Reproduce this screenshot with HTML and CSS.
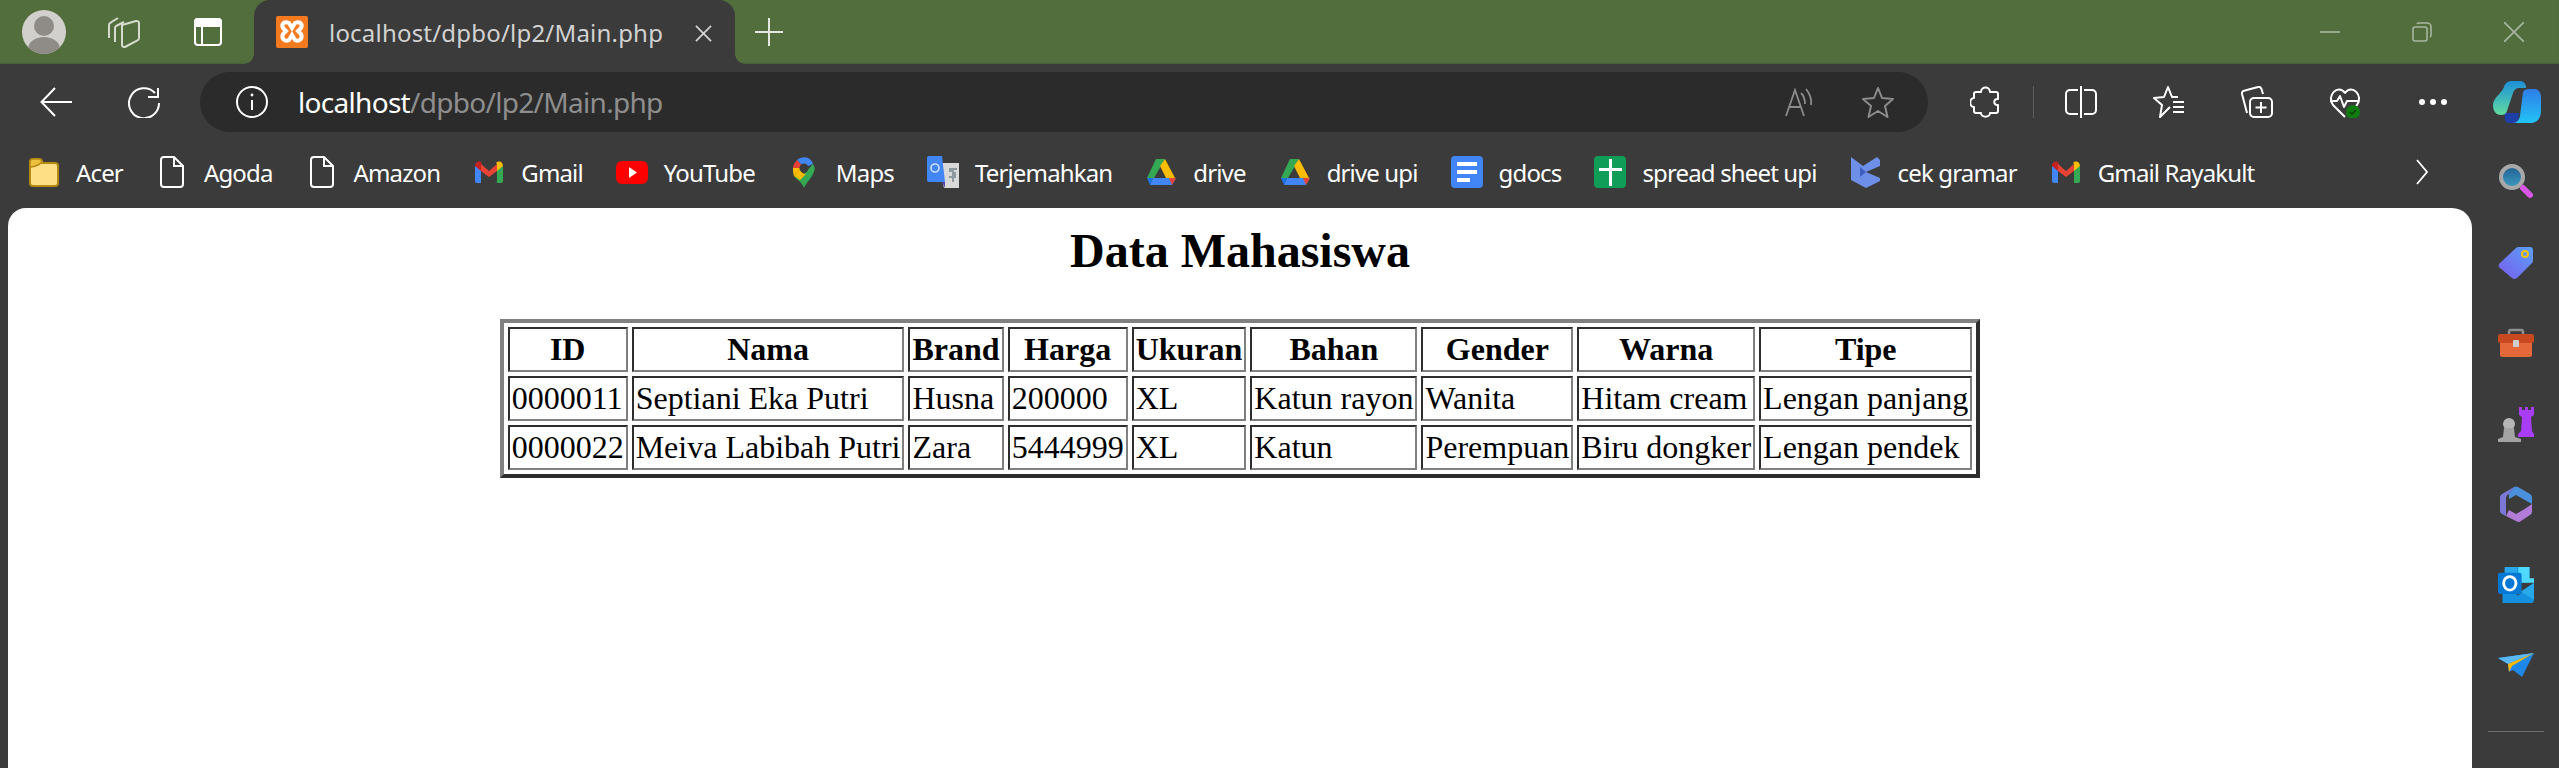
FILE: index.html
```html
<!DOCTYPE html>
<html lang="en">
<head>
    <meta charset="UTF-8">
    <title>localhost/dpbo/lp2/Main.php</title>
    <link rel="stylesheet" href="styles.css">
</head>
<body>
<svg class="defs" width="0" height="0">
    <symbol id="gmail" viewBox="0 0 32 32">
        <path fill="#4285f4" d="M2 10v15a2 2 0 0 0 2 2h4V13z"/>
        <path fill="#34a853" d="M30 10v15a2 2 0 0 1-2 2h-4V13z"/>
        <path fill="#ea4335" d="M8 8l8 7 8-7v7l-8 6-8-6z"/>
        <path fill="#c5221f" d="M2 10c0-4 4-6 7-3l-1 1v7L2 10z"/>
        <path fill="#fbbc04" d="M30 10c0-4-4-6-7-3l1 1v7l6-5z"/>
    </symbol>
    <symbol id="drive" viewBox="0 0 32 32">
        <path fill="#34a853" d="M11 3h9L9 22H2z"/>
        <path fill="#fbbc04" d="M20 3l10 19h-9L15 10z"/>
        <path fill="#4285f4" d="M8 22h23l-4 7H5z"/>
        <path fill="#ea4335" d="M24 22h7l-4 7z"/>
        <path fill="#1a73e8" d="M2 22h6l-3 7z"/>
    </symbol>
    <symbol id="page" viewBox="0 0 32 32">
        <path fill="none" stroke="#fff" stroke-width="2" d="M8 1h10l9 9v18a3 3 0 0 1-3 3H8a3 3 0 0 1-3-3V4a3 3 0 0 1 3-3zM18 1v9h9"/>
    </symbol>
</svg>

<div class="window">
    <header class="titlebar">
        <svg class="avatar" viewBox="0 0 44 44">
            <clipPath id="av"><circle cx="22" cy="22" r="22"/></clipPath>
            <circle cx="22" cy="22" r="22" fill="#d2d0cc"/>
            <g clip-path="url(#av)" fill="#8f8b87">
                <circle cx="22" cy="16" r="10"/>
                <ellipse cx="22" cy="39" rx="16" ry="12"/>
            </g>
        </svg>
        <svg class="ic32 tabs-ic" viewBox="0 0 32 32" fill="none" stroke="#d5dccf" stroke-width="2">
            <path d="M1 22V9c0-1 .6-2 1.600-2.300L10 2"/>
            <path d="M7 26V12c0-1 .6-2 1.600-2.300L16 6"/>
            <path d="M14 9l14-4c1.500-.4 3 .5 3 2v15c0 1-.6 2-1.600 2.400L17 31c-1.500.4-3-.5-3-2z"/>
        </svg>
        <svg class="vtabs-ic" viewBox="0 0 28 28" fill="none" stroke="#fff" stroke-width="2">
            <rect x="1" y="1" width="26" height="26" rx="3"/>
            <path fill="#fff" d="M1 4a3 3 0 0 1 3-3h20a3 3 0 0 1 3 3v4H1z"/>
            <path d="M8 8v19"/>
        </svg>
        <div class="tab">
            <svg class="ic32" viewBox="0 0 32 32">
                <rect width="32" height="32" rx="2" fill="#f47a1f"/>
                <path fill="none" stroke="#fff" stroke-width="4" d="M13 7C8 5 5 8 7 12l3 3-3 3c-2 5 2 8 6 6l3-5 3 5c4 2 8-1 6-6l-3-3 3-3c2-4-1-7-6-5l-3 5z"/>
            </svg>
            <span class="tab-title">localhost/dpbo/lp2/Main.php</span>
            <svg class="tab-close" viewBox="0 0 18 18" stroke="#d4d4d4" stroke-width="1.8"><path d="M1 1l16 16M17 1L1 17"/></svg>
        </div>
        <svg class="new-tab" viewBox="0 0 28 28" stroke="#e4e8e0" stroke-width="2"><path d="M14 0v28M0 14h28"/></svg>
        <div class="win-controls">
            <svg class="win-ic" viewBox="0 0 20 20" stroke="#a9b6a0" stroke-width="1.600"><path d="M0 10h20"/></svg>
            <svg class="win-ic" viewBox="0 0 20 20" fill="none" stroke="#a9b6a0" stroke-width="1.600"><rect x="1" y="5" width="14" height="14" rx="2"/><path d="M5 2a2 2 0 0 1 2-1h8a4 4 0 0 1 4 4v8a2 2 0 0 1-1 2"/></svg>
            <svg class="win-ic" viewBox="0 0 20 20" stroke="#a9b6a0" stroke-width="1.600"><path d="M0 0l20 20M20 0L0 20"/></svg>
        </div>
    </header>

    <div class="toolbar">
        <svg class="ic32" viewBox="0 0 32 32" fill="none" stroke="#fff" stroke-width="2"><path d="M32 16H2M15 2L1.500 16 15 30"/></svg>
        <svg class="ic32" viewBox="0 0 32 32" fill="none" stroke="#fff" stroke-width="2"><path d="M27 7A15 15 0 1 0 31 17M30 2v9H20"/></svg>
        <div class="address">
            <svg class="ic32" viewBox="0 0 32 32" fill="none" stroke="#fff" stroke-width="2"><circle cx="16" cy="16" r="15"/><path d="M16 14v10"/><circle cx="16" cy="9" r="1.400" fill="#fff" stroke="none"/></svg>
            <span class="url"><span class="url-host">localhost</span>/dpbo/lp2/Main.php</span>
            <svg class="read-ic" viewBox="0 0 30 30" fill="none" stroke="#8c8c8c" stroke-width="1.800"><path d="M1 29L10 3l9 26M4.500 20h11M16 6c3 3 4 7 4 11M21 2c4 5 6 10 5 16"/></svg>
            <svg class="ic32" viewBox="0 0 32 32" fill="none" stroke="#8c8c8c" stroke-width="2"><path d="M16 2l4 10 11 1-8 7 2.500 11L16 25l-9.500 6L9 20l-8-7 11-1z" stroke-linejoin="round"/></svg>
        </div>
        <div class="tools">
            <div class="tools-left">
                <svg class="ic32" viewBox="0 0 32 32" fill="none" stroke="#fff" stroke-width="2"><path d="M11 6c0-6 9-6 9 0h6a2 2 0 0 1 2 2v5c-5-1-5 7 0 6v6a2 2 0 0 1-2 2h-6c0 5-9 5-9 0H6a2 2 0 0 1-2-2v-4c-5 0-5-9 0-9V8a2 2 0 0 1 2-2z" stroke-linejoin="round"/></svg>
                <span class="tool-sep"></span>
                <svg class="ic32" viewBox="0 0 32 32" fill="none" stroke="#fff" stroke-width="2"><path d="M13 4H5a4 4 0 0 0-4 4v16a4 4 0 0 0 4 4h8M19 4h8a4 4 0 0 1 4 4v16a4 4 0 0 1-4 4h-8M16 0v32"/></svg>
            </div>
            <svg class="ic32" viewBox="0 0 32 32" fill="none" stroke="#fff" stroke-width="2"><path d="M17 21l-10 10 2-12-8-7 10-1 4-10 4 10h6M20 16h11M20 21h11M20 26h11" stroke-linejoin="round"/></svg>
            <svg class="ic32" viewBox="0 0 32 32" fill="none" stroke="#fff" stroke-width="2"><path d="M6 27L1 8c-.4-1.500.5-3 2-3.300L17 1c1.500-.4 3 .5 3.500 2l1.500 5"/><rect x="9" y="12" width="22" height="19" rx="4"/><path d="M20 16v11M14.500 21.500h11"/></svg>
            <svg class="ic32" viewBox="0 0 32 32" fill="none" stroke="#fff" stroke-width="2">
                <path d="M16 31L4 19C-3 10 9-3 16 7c7-10 19 3 12 12l-1 1M1 15h7l3-5 4 11 3-6h12" stroke-linejoin="round"/>
                <circle cx="24" cy="26" r="7" fill="#107c10" stroke="none"/>
                <path d="M21 26l2 2 4-4" stroke="#0a3d0a" stroke-width="1.400"/>
            </svg>
            <svg class="ic32" viewBox="0 0 32 32" fill="#fff"><circle cx="5" cy="16" r="3"/><circle cx="16" cy="16" r="3"/><circle cx="27" cy="16" r="3"/></svg>
            <svg class="copilot" viewBox="0 0 48 42">
                <defs>
                    <linearGradient id="cp1" x1="0" y1="0" x2="0" y2="1"><stop offset="0" stop-color="#1b8fd8"/><stop offset="1" stop-color="#62dca0"/></linearGradient>
                    <linearGradient id="cp2" x1="0" y1="0" x2="0" y2="1"><stop offset="0" stop-color="#2f7de8"/><stop offset="1" stop-color="#22c3f5"/></linearGradient>
                </defs>
                <path fill="#1f3fa8" d="M12 32h14l-1 10H16c-4 0-5-5-4-10z"/>
                <path fill="url(#cp1)" d="M11 6c1-4 4-6 8-6h8c4 0 6 3 6 7H26c-3 0-5 2-6 5l-6 18c-1 3-3 4-6 4-5 0-8-4-8-10C0 17 8 13 11 6z"/>
                <path fill="url(#cp2)" d="M30 11c1-2 3-3 6-3h6c3 0 6 3 6 8v14c0 7-4 12-10 12H20c4 0 6-3 7-7z"/>
            </svg>
        </div>
    </div>

    <div class="lower">
        <div class="content">
            <nav class="bookmarks">
                <a class="bm">
                    <svg class="ic32" viewBox="0 0 32 32"><path fill="#ffdf85" stroke="#b38a12" stroke-width="2" d="M2 6a3 3 0 0 1 3-3h6a3 3 0 0 1 3 4h13a3 3 0 0 1 3 3v17a3 3 0 0 1-3 3H5a3 3 0 0 1-3-3z"/><path fill="#ecbf3c" stroke="#b38a12" stroke-width="1.500" d="M2 11V6a3 3 0 0 1 3-3h6c3 0 3 3 2 4l-3 2c-2 1-5 2-8 2z"/></svg>
                    Acer
                </a>
                <a class="bm"><svg class="ic32"><use href="#page"/></svg>Agoda</a>
                <a class="bm"><svg class="ic32"><use href="#page"/></svg>Amazon</a>
                <a class="bm"><svg class="ic32"><use href="#gmail"/></svg>Gmail</a>
                <a class="bm">
                    <svg class="ic32" viewBox="0 0 32 32"><rect y="5" width="32" height="23" rx="6" fill="#f00"/><path fill="#fff" d="M13 11l8 5.500-8 5.500z"/></svg>
                    YouTube
                </a>
                <a class="bm">
                    <svg class="ic32" viewBox="0 0 32 32">
                        <path fill="#34a853" d="M6 20c3 4 8 6 10 12 2-6 8-9 10-17L16 18z"/>
                        <path fill="#fbbc04" d="M5 12c0 3 0 5 1 8l6-7-1-3z"/>
                        <path fill="#ea4335" d="M5 12C5 9 7 6 9 4l5 5-3 3z"/>
                        <path fill="#4285f4" d="M9 4c6-5 14-3 16 4l-7 3-4-2z"/>
                        <path fill="#34a853" d="M25 8c2 3 2 5 1 8l-9 7-2-4z"/>
                        <path fill="#fbbc04" d="M6 20l6-7c1 3 3 5 6 5l-6 6z"/>
                        <circle cx="16" cy="12" r="4.500" fill="#3b3b3b"/>
                    </svg>
                    Maps
                </a>
                <a class="bm">
                    <svg class="ic32" viewBox="0 0 32 32">
                        <path fill="#d9d9d9" d="M11 7h21v25H17z"/>
                        <path fill="#8e9aa0" d="M22 12h8v2h-3v2h2v6h-2v4h-2v-4h-3v-2h3v-4h-3z"/>
                        <path fill="#5144b0" d="M15 26h3v6z"/>
                        <path fill="#4285f4" d="M0 2a2 2 0 0 1 2-2h13l3 26H2a2 2 0 0 1-2-2z"/>
                        <circle cx="8" cy="12" r="4" fill="none" stroke="#cfe0fb" stroke-width="1.600"/>
                    </svg>
                    Terjemahkan
                </a>
                <a class="bm"><svg class="ic32"><use href="#drive"/></svg>drive</a>
                <a class="bm"><svg class="ic32"><use href="#drive"/></svg>drive upi</a>
                <a class="bm">
                    <svg class="ic32" viewBox="0 0 32 32"><rect width="32" height="32" rx="4" fill="#4285f4"/><path fill="#fff" d="M6 6h20v4H6zM6 14h20v4H6zM6 22h13v4H6z"/></svg>
                    gdocs
                </a>
                <a class="bm">
                    <svg class="ic32" viewBox="0 0 32 32"><rect width="32" height="32" rx="4" fill="#0f9d58"/><path fill="#fff" d="M15 3h3v9h10v3H18v15h-3V15H5v-3h10z"/></svg>
                    spread sheet upi
                </a>
                <a class="bm">
                    <svg class="ic32" viewBox="0 0 32 32"><path fill="#6d8fe8" d="M1 1l12 9L27 1l3 3v6l-14 6 14 6v3L16 32 1 24z"/><path fill="#3d5fc4" d="M10 11l6 5-6 5z"/></svg>
                    cek gramar
                </a>
                <a class="bm"><svg class="ic32"><use href="#gmail"/></svg>Gmail Rayakult</a>
                <svg class="bm-more" viewBox="0 0 12 26" fill="none" stroke="#fff" stroke-width="1.800"><path d="M1 1l10 12L1 25"/></svg>
            </nav>
            <main class="page">
                <h1 class="page-title">Data Mahasiswa</h1>
                <table class="data">
                    <tr><th>ID</th><th>Nama</th><th>Brand</th><th>Harga</th><th>Ukuran</th><th>Bahan</th><th>Gender</th><th>Warna</th><th>Tipe</th></tr>
                    <tr><td>0000011</td><td>Septiani Eka Putri</td><td>Husna</td><td>200000</td><td>XL</td><td>Katun rayon</td><td>Wanita</td><td>Hitam cream</td><td>Lengan panjang</td></tr>
                    <tr><td>0000022</td><td>Meiva Labibah Putri</td><td>Zara</td><td>5444999</td><td>XL</td><td>Katun</td><td>Perempuan</td><td>Biru dongker</td><td>Lengan pendek</td></tr>
                </table>
            </main>
        </div>
        <aside class="sidebar">
            <div class="side-item">
                <svg class="side-ic" viewBox="0 0 36 36">
                    <defs><linearGradient id="lens" x1="0" y1="0" x2="0" y2="1"><stop offset="0" stop-color="#1f5f8f"/><stop offset="1" stop-color="#3f9cc4"/></linearGradient></defs>
                    <circle cx="14" cy="13" r="11" fill="url(#lens)" stroke="#a8a8a8" stroke-width="4"/>
                    <path stroke="#d957e8" stroke-width="6" stroke-linecap="round" d="M25 24l7 7"/>
                </svg>
            </div>
            <div class="side-item">
                <svg class="side-ic" viewBox="0 0 36 36">
                    <defs><linearGradient id="tag" x1="0" y1="1" x2="1" y2="0"><stop offset="0" stop-color="#7a5cf0"/><stop offset="1" stop-color="#5aa0f5"/></linearGradient></defs>
                    <path fill="url(#tag)" d="M21 2h11a3 3 0 0 1 3 3v10a4 4 0 0 1-1 3L19 33a4 4 0 0 1-5 0L2 23a3 3 0 0 1 0-5L18 3a4 4 0 0 1 3-1z"/>
                    <circle cx="27" cy="9" r="3" fill="none" stroke="#f7c600" stroke-width="2"/>
                </svg>
            </div>
            <div class="side-item">
                <svg class="side-ic" viewBox="0 0 36 36">
                    <path fill="none" stroke="#8f8f8f" stroke-width="2.500" d="M11 10V7a2 2 0 0 1 2-2h10a2 2 0 0 1 2 2v3"/>
                    <path fill="#e5683a" d="M2 15h32v15a2 2 0 0 1-2 2H4a2 2 0 0 1-2-2z"/>
                    <path fill="#c8481f" d="M0 11a2 2 0 0 1 2-2h32a2 2 0 0 1 2 2v5a2 2 0 0 1-2 2H2a2 2 0 0 1-2-2z"/>
                    <rect x="15" y="15" width="6" height="7" rx="1" fill="#cfcfcf"/>
                </svg>
            </div>
            <div class="side-item">
                <svg class="side-ic" viewBox="0 0 36 36">
                    <path fill="#a93cf5" d="M21 1h3v3h3V1h3v3h3V1h3v8l-3 2 1 14 2 3v3H20v-3l3-3 1-14-3-2z"/>
                    <circle cx="11" cy="18" r="6" fill="#b5b5b5"/>
                    <path fill="#a3a3a3" d="M6 22h10l1 9 6 2v3H0v-3l5-2z"/>
                </svg>
            </div>
            <div class="side-item">
                <svg class="side-ic" viewBox="0 0 32 36">
                    <path fill="#7b78d8" d="M14 1L2 8a4 4 0 0 0-2 4v12a4 4 0 0 0 2 4l4 2V12c0-2 1-3 3-4z"/>
                    <path fill="#4a90dc" d="M14 1a4 4 0 0 1 4 0l12 7a4 4 0 0 1 2 4v6L16 9 9 13V8z"/>
                    <path fill="#b07cd8" d="M6 30l12 6a4 4 0 0 0 3-1l9-6a4 4 0 0 0 2-4v-7l-9 6-7 4-7-4z"/>
                    <path fill="#3b3b3b" d="M11 14l5-3 7 4v7l-7 4-5-3z"/>
                </svg>
            </div>
            <div class="side-item">
                <svg class="side-ic" viewBox="0 0 32 32">
                    <path fill="#1490df" d="M6 0h22v14H6z"/>
                    <path fill="#28a8ea" d="M6 0h11v9H6z"/>
                    <path fill="#50d9ff" d="M18 0h10v10h4v4H18z"/>
                    <path fill="#1490df" d="M4 19l14 6 14-11v15a3 3 0 0 1-3 3H4z"/>
                    <path fill="#28a8ea" d="M32 14v15l-12-7z"/>
                    <rect y="5" width="21" height="19" rx="2" fill="#0078d4"/>
                    <ellipse cx="10.500" cy="14.500" rx="5.500" ry="6" fill="none" stroke="#fff" stroke-width="2.500"/>
                </svg>
            </div>
            <div class="side-item">
                <svg class="side-ic send-ic" viewBox="0 0 36 24">
                    <path fill="#1f87e8" d="M0 5l36-5-12 24-9-7-4 2-1-8z"/>
                    <path fill="#5ab8f5" d="M36 0L0 5l10 6z"/>
                    <path fill="#fbb900" d="M36 0L10 11l1 8 3-6z"/>
                </svg>
            </div>
            <span class="side-sep"></span>
        </aside>
    </div>
</div>
</body>
</html>
```

FILE: styles.css
```css
html, body {
    margin: 0;
    height: 100%;
    overflow: hidden;
}
body {
    background-color: #3b3b3b;
    font-family: "Noto Sans", "Open Sans", sans-serif;
}
.defs {
    display: block;
    height: 0;
}
svg {
    display: block;
    flex: none;
}
.ic32 {
    width: 32px;
    height: 32px;
}
.window {
    display: flex;
    flex-direction: column;
    height: 100vh;
}

/* title bar */
.titlebar {
    display: flex;
    align-items: center;
    height: 64px;
    flex: none;
    padding-left: 22px;
    padding-right: 35px;
    background-color: #526e3c;
    box-shadow: inset 0 -2px 2px -1px #46603a;
}
.avatar {
    width: 44px;
    height: 44px;
}
.tabs-ic {
    margin-left: 42px;
}
.vtabs-ic {
    width: 28px;
    height: 28px;
    margin-left: 54px;
}
.tab {
    position: relative;
    display: flex;
    align-items: center;
    align-self: stretch;
    width: 459px;
    margin-left: 32px;
    padding-left: 22px;
    background-color: #3b3b3b;
    border-radius: 16px 16px 0 0;
}
.tab::before, .tab::after {
    content: "";
    position: absolute;
    bottom: 0;
    width: 10px;
    height: 10px;
}
.tab::before {
    left: -10px;
    background: radial-gradient(circle at 0 0, transparent 9.500px, #3b3b3b 10px);
}
.tab::after {
    right: -10px;
    background: radial-gradient(circle at 100% 0, transparent 9.500px, #3b3b3b 10px);
}
.tab-title {
    margin-left: 21px;
    font-size: 24px;
    letter-spacing: .2px;
    color: #d2d2d2;
    white-space: nowrap;
}
.tab-close {
    width: 17px;
    height: 17px;
    margin-left: auto;
    margin-right: 23px;
    margin-top: 3px;
}
.new-tab {
    width: 28px;
    height: 28px;
    margin-left: 20px;
}
.win-controls {
    display: flex;
    gap: 72px;
    margin-left: auto;
}
.win-ic {
    width: 20px;
    height: 20px;
}

/* toolbar */
.toolbar {
    display: flex;
    align-items: center;
    gap: 56px;
    flex: none;
    height: 60px;
    padding: 8px 18px 0 40px;
}
.address {
    display: flex;
    align-items: center;
    flex: 1;
    height: 60px;
    margin-left: -16px;
    padding: 0 34px 0 36px;
    background-color: #2b2b2b;
    border-radius: 30px;
}
.url {
    margin-left: 30px;
    font-size: 28px;
    letter-spacing: -.7px;
    color: #8e8e8e;
}
.url-host {
    color: #fff;
}
.read-ic {
    width: 30px;
    height: 30px;
    margin-left: auto;
    margin-right: 47px;
}
.tools {
    display: flex;
    align-items: center;
    gap: 56px;
    margin-left: -14px;
}
.tools-left {
    display: flex;
    align-items: center;
    gap: 31px;
}
.tool-sep {
    width: 1px;
    height: 32px;
    background-color: #5f5f5f;
}
.copilot {
    width: 48px;
    height: 42px;
    margin-left: -12px;
}

/* lower part: bookmarks, page and side panel */
.lower {
    display: flex;
    flex: 1;
    min-height: 0;
}
.content {
    display: flex;
    flex-direction: column;
    flex: 1;
    min-width: 0;
}
.bookmarks {
    display: flex;
    align-items: center;
    gap: 33px;
    height: 72px;
    flex: none;
    padding: 4px 0 0 28px;
}
.bm {
    display: flex;
    align-items: center;
    gap: 16px;
    font-size: 24px;
    letter-spacing: -.85px;
    color: #fff;
    white-space: nowrap;
}
.bm-more {
    width: 12px;
    height: 26px;
    margin-left: auto;
    margin-right: 44px;
}
.page {
    flex: 1;
    margin-left: 8px;
    background-color: #fff;
    border-radius: 18px 20px 0 0;
    color: #000;
    font-family: "Liberation Serif", serif;
}
.page-title {
    margin: 0 0 41px;
    padding-top: 15px;
    font-size: 48px;
    text-align: center;
}
.data {
    margin: 0 auto;
    border-collapse: separate;
    border-spacing: 4px;
    border-width: 4px;
    border-style: solid;
    border-color: #808080 #2d2d2d #2d2d2d #808080;
    font-size: 32px;
}
.data th, .data td {
    padding: 2px;
    border-width: 2px;
    border-style: solid;
    border-color: #2d2d2d #808080 #808080 #2d2d2d;
}
.sidebar {
    display: flex;
    flex-direction: column;
    align-items: center;
    flex: none;
    width: 87px;
    padding-top: 10px;
}
.side-item {
    display: flex;
    align-items: center;
    justify-content: center;
    height: 80.500px;
    flex: none;
}
.side-ic {
    width: 36px;
    height: 36px;
}
.send-ic {
    height: 24px;
}
.side-sep {
    width: 56px;
    height: 1px;
    margin-top: 25px;
    background-color: #6e6e6e;
}
```
